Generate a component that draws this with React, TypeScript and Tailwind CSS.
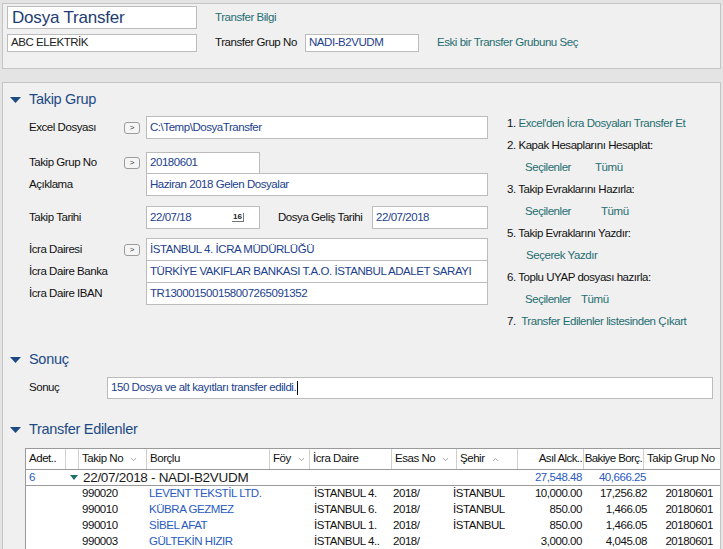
import React from 'react';
import { ChevronDown, ChevronUp } from 'lucide-react';

const Tri = ({ className = '' }: { className?: string }) => (
  <svg width="11" height="6" viewBox="0 0 11 6" className={className}>
    <path d="M0 0h11L5.5 6z" fill="currentColor" />
  </svg>
);

const SectionHead = ({ title, className = '' }: { title: string; className?: string }) => (
  <div className={`flex items-center h-[20px] ${className}`}>
    <div className="w-[26px] pl-[7px] text-[#1d4a85] flex items-center">
      <Tri />
    </div>
    <span className="text-[14.5px] tracking-[-0.3px] text-[#1d4a85]">{title}</span>
  </div>
);

const Box = ({ children, className = '' }: { children?: React.ReactNode; className?: string }) => (
  <div className={`border border-[#bcbcbc] bg-white flex items-center px-[3px] text-[#1c418e] whitespace-nowrap overflow-hidden ${className}`}>
    {children}
  </div>
);

const PickBtn = () => (
  <div className="w-[16px] h-[12px] rounded-[3px] border border-[#9c9c9c] bg-[#f5f5f5] flex items-center justify-center text-[8px] leading-none tracking-normal text-[#333] mr-[6px]">
    &gt;
  </div>
);

const Label = ({ children, w = 'w-[95px]' }: { children: React.ReactNode; w?: string }) => (
  <div className={`${w} text-[#111]`}>{children}</div>
);

const cols = [
  'w-[40px]',
  'w-[13px]',
  'w-[68px]',
  'w-[123px]',
  'w-[40px]',
  'w-[82px]',
  'w-[65px]',
  'w-[61px]',
  'w-[66px]',
  'w-[60px]',
  'w-[80px]',
];

const headers: { t: string; icon?: 'down' | 'up'; right?: boolean }[] = [
  { t: 'Adet..' },
  { t: '' },
  { t: 'Takip No', icon: 'down' },
  { t: 'Borçlu' },
  { t: 'Föy', icon: 'down' },
  { t: 'İcra Daire' },
  { t: 'Esas No', icon: 'down' },
  { t: 'Şehir', icon: 'up' },
  { t: 'Asıl Alck..', right: true },
  { t: 'Bakiye Borç.', right: true },
  { t: 'Takip Grup No' },
];

const rows = [
  ['990020', 'LEVENT TEKSTİL LTD.', 'İSTANBUL 4.', '2018/', 'İSTANBUL', '10,000.00', '17,256.82', '20180601'],
  ['990010', 'KÜBRA GEZMEZ', 'İSTANBUL 6.', '2018/', 'İSTANBUL', '850.00', '1,466.05', '20180601'],
  ['990010', 'SİBEL AFAT', 'İSTANBUL 1.', '2018/', 'İSTANBUL', '850.00', '1,466.05', '20180601'],
  ['990003', 'GÜLTEKİN HIZIR', 'İSTANBUL 4..', '2018/', '', '3,000.00', '4,045.08', '20180601'],
];

const link = 'text-[#1f6e70]';

export default function App() {
  return (
    <div className="w-[723px] h-[549px] overflow-hidden bg-[#e4e4e4] font-['Liberation_Sans',sans-serif] text-[11.5px] tracking-[-0.45px] text-[#111]">
      {/* üst panel */}
      <div className="mt-[3px] ml-[2px] mr-[2px] h-[66px] border border-[#c4c4c4] bg-[#f0f0f0] pl-[4px] pt-[2px]">
        <div className="flex items-center">
          <Box className="w-[190px] h-[23px] !text-[17px] !tracking-[-0.2px] !text-[#1d3d72] !px-[4px]">Dosya Transfer</Box>
          <span className={`ml-[18px] ${link}`}>Transfer Bilgi</span>
        </div>
        <div className="flex items-center mt-[5px]">
          <Box className="w-[190px] h-[18px] !text-[#222]">ABC ELEKTRİK</Box>
          <span className="ml-[18px] w-[90px]">Transfer Grup No</span>
          <Box className="w-[114px] h-[18px]">NADI-B2VUDM</Box>
          <span className={`ml-[18px] ${link}`}>Eski bir Transfer Grubunu Seç</span>
        </div>
      </div>

      {/* ana panel */}
      <div className="mt-[13px] ml-[2px] mr-[2px] h-[480px] border border-[#c4c4c4] border-b-0 bg-[#f0f0f0]">
        <SectionHead title="Takip Grup" className="mt-[7px]" />

        <div className="flex">
          <div className="pl-[26px] w-[485px]">
            <div className="flex items-center mt-[6px]">
              <Label>Excel Dosyası</Label>
              <PickBtn />
              <Box className="flex-1 h-[23px]">C:\Temp\DosyaTransfer</Box>
            </div>
            <div className="flex items-center mt-[13px]">
              <Label>Takip Grup No</Label>
              <PickBtn />
              <Box className="w-[114px] h-[22px]">20180601</Box>
            </div>
            <div className="flex items-center -mt-[1px]">
              <Label w="w-[117px]">Açıklama</Label>
              <Box className="flex-1 h-[23px]">Haziran 2018 Gelen Dosyalar</Box>
            </div>
            <div className="flex items-center mt-[10px]">
              <Label w="w-[117px]">Takip Tarihi</Label>
              <Box className="w-[114px] h-[23px] justify-between">
                <span>22/07/18</span>
                <span className="mr-[12px] text-[8px] font-bold leading-none tracking-normal text-[#222] border-b border-r border-[#777] px-[1px]">16</span>
              </Box>
              <span className="ml-[18px] w-[94px]">Dosya Geliş Tarihi</span>
              <Box className="flex-1 h-[23px]">22/07/2018</Box>
            </div>
            <div className="flex items-center mt-[9px]">
              <Label>İcra Dairesi</Label>
              <PickBtn />
              <Box className="flex-1 h-[23px]">İSTANBUL 4. İCRA MÜDÜRLÜĞÜ</Box>
            </div>
            <div className="flex items-center -mt-[1px]">
              <Label w="w-[117px]">İcra Daire Banka</Label>
              <Box className="flex-1 h-[23px]">TÜRKİYE VAKIFLAR BANKASI T.A.O. İSTANBUL ADALET SARAYI</Box>
            </div>
            <div className="flex items-center -mt-[1px]">
              <Label w="w-[117px]">İcra Daire IBAN</Label>
              <Box className="flex-1 h-[23px]">TR130001500158007265091352</Box>
            </div>
          </div>

          <div className="ml-[19px] mt-[3px] flex flex-col">
            <div className="h-[22px] flex items-center">1.&nbsp;<span className={link}>Excel'den İcra Dosyaları Transfer Et</span></div>
            <div className="h-[22px] flex items-center">2. Kapak Hesaplarını Hesaplat:</div>
            <div className={`h-[22px] flex items-center pl-[18px] ${link}`}>
              <span className="w-[70px]">Seçilenler</span><span>Tümü</span>
            </div>
            <div className="h-[22px] flex items-center">3. Takip Evraklarını Hazırla:</div>
            <div className={`h-[22px] flex items-center pl-[18px] ${link}`}>
              <span className="w-[76px]">Seçilenler</span><span>Tümü</span>
            </div>
            <div className="h-[22px] flex items-center">5. Takip Evraklarını Yazdır:</div>
            <div className={`h-[22px] flex items-center pl-[19px] ${link}`}>Seçerek Yazdır</div>
            <div className="h-[22px] flex items-center">6. Toplu UYAP dosyası hazırla:</div>
            <div className={`h-[22px] flex items-center pl-[18px] ${link}`}>
              <span className="w-[56px]">Seçilenler</span><span>Tümü</span>
            </div>
            <div className="h-[22px] flex items-center">7.&nbsp;&nbsp;<span className={link}>Transfer Edilenler listesinden Çıkart</span></div>
          </div>
        </div>

        <SectionHead title="Sonuç" className="mt-[17px]" />
        <div className="flex items-center mt-[7px] pl-[26px]">
          <Label w="w-[78px]">Sonuç</Label>
          <Box className="w-[606px] h-[22px]">
            150 Dosya ve alt kayıtları transfer edildi.
            <span className="inline-block w-[1px] h-[14px] bg-black ml-[1px]" />
          </Box>
        </div>

        <SectionHead title="Transfer Edilenler" className="mt-[21px]" />

        {/* grid */}
        <div className="mt-[8px] ml-[22px] border-l border-t border-[#9a9a9a] bg-white">
          <div className="flex h-[21px] border-b border-[#9a9a9a] bg-white">
            {headers.map((h, i) => (
              <div
                key={i}
                className={`${cols[i]} shrink-0 flex items-center whitespace-nowrap overflow-hidden ${h.right ? 'justify-end px-[1px] tracking-[-0.6px]' : 'px-[3px]'} ${i < headers.length - 1 ? 'border-r border-[#d0d0d0]' : ''}`}
              >
                <span>{h.t}</span>
                {h.icon === 'down' && <ChevronDown size={9} className="ml-[6px] text-[#888]" />}
                {h.icon === 'up' && <ChevronUp size={9} className="ml-[6px] text-[#888]" />}
              </div>
            ))}
          </div>
          <div className="flex h-[16px] border-b border-[#9a9a9a] items-center">
            <div className="w-[40px] shrink-0 pl-[3px] text-[#2a5bbf]">6</div>
            <div className="w-[13px] shrink-0 flex items-center justify-end pr-[1px] text-[#20706a]">
              <svg width="8" height="5" viewBox="0 0 8 5"><path d="M0 0h8L4 5z" fill="currentColor" /></svg>
            </div>
            <div className="w-[439px] shrink-0 pl-[4px] text-[13.5px] tracking-[-0.3px] leading-none text-[#1a1a1a] whitespace-nowrap">22/07/2018 - NADI-B2VUDM</div>
            <div className="w-[66px] shrink-0 text-right pr-[2px] text-[#2a5bbf]">27,548.48</div>
            <div className="w-[62px] shrink-0 text-right text-[#2a5bbf]">40,666.25</div>
          </div>
          {rows.map((r, i) => (
            <div key={i} className="flex h-[16px] items-center whitespace-nowrap">
              <div className="w-[53px] shrink-0" />
              <div className="w-[68px] shrink-0 pl-[3px]">{r[0]}</div>
              <div className="w-[163px] shrink-0 pl-[2px] text-[#2a5bbf]">{r[1]}</div>
              <div className="w-[82px] shrink-0 pl-[4px] overflow-hidden">{r[2]}</div>
              <div className="w-[61px] shrink-0 pl-[1px]">{r[3]}</div>
              <div className="w-[65px] shrink-0">{r[4]}</div>
              <div className="w-[65px] shrink-0 text-right pr-[1px]">{r[5]}</div>
              <div className="w-[64px] shrink-0 text-right">{r[6]}</div>
              <div className="w-[66px] shrink-0 text-right">{r[7]}</div>
            </div>
          ))}
        </div>
      </div>
    </div>
  );
}
